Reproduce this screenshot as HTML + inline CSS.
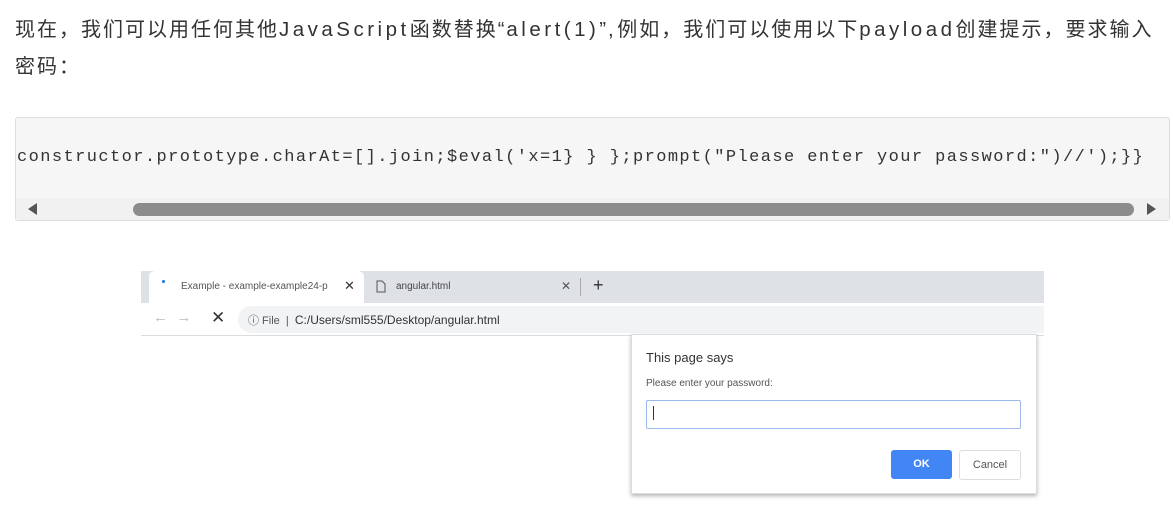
<!DOCTYPE html>
<html><head><meta charset="utf-8"><style>
body{margin:0;width:1173px;height:513px;background:#fff;overflow:hidden;font-family:"Liberation Sans","Noto Sans CJK SC",sans-serif;position:relative}
.p{position:absolute;left:15px;top:11px;white-space:nowrap;font-size:20px;line-height:37px;color:#333;letter-spacing:2px}
.p span{letter-spacing:3.5px;font-size:20.5px}
.code{position:absolute;left:15px;top:117px;width:1153px;height:102px;border:1px solid #ddd;background:#f6f6f6;border-radius:3px}
.code pre{margin:0;position:absolute;left:1px;top:30px;font-family:"Liberation Mono",monospace;font-size:17px;letter-spacing:1.42px;color:#333}
.sb{position:absolute;left:0;top:80px;width:1153px;height:22px;background:#f1f1f1}
.thumb{position:absolute;left:117px;top:5px;width:1001px;height:13px;background:#8c8c8c;border-radius:7px}
.tri{position:absolute;top:5px;width:0;height:0;border-top:6px solid transparent;border-bottom:6px solid transparent}
.sm{font-family:"Liberation Sans",sans-serif;position:absolute}
</style></head><body>
<div class="p">现在，我们可以用任何其他<span>JavaScript</span>函数替换“<span>alert(1)</span>”<span>,</span>例如，我们可以使用以下<span>payload</span>创建提示，要求输入<br>密码：</div>
<div class="code"><pre>constructor.prototype.charAt=[].join;$eval('x=1} } };prompt("Please enter your password:")//');}}</pre>
<div class="sb"><div class="tri" style="left:12px;border-right:9px solid #555"></div><div class="thumb"></div><div class="tri" style="left:1131px;border-left:9px solid #555"></div></div></div>

<div style="position:absolute;left:141px;top:271px;width:903px;height:32px;background:#dee1e6"></div>
<div style="position:absolute;left:149px;top:271px;width:215px;height:32px;background:#fff;border-radius:6px 6px 0 0"></div>
<div style="position:absolute;left:162px;top:280px;width:3px;height:3px;background:#1a73e8;border-radius:2px"></div>
<div class="sm" style="left:181px;top:281px;font-size:10px;color:#555">Example - example-example24-p</div>
<div class="sm" style="left:344px;top:278px;font-size:13px;color:#333">✕</div>
<svg style="position:absolute;left:376px;top:280px" width="10" height="13"><path d="M1 1h5l3 3v8H1z" fill="none" stroke="#555"/></svg>
<div class="sm" style="left:396px;top:281px;font-size:10px;color:#444">angular.html</div>
<div class="sm" style="left:561px;top:279px;font-size:12px;color:#555">✕</div>
<div style="position:absolute;left:580px;top:278px;width:1px;height:18px;background:#aaa"></div>
<div class="sm" style="left:593px;top:275px;font-size:18px;color:#333">+</div>
<div style="position:absolute;left:141px;top:303px;width:903px;height:32px;background:#fff;border-bottom:1px solid #ddd"></div>
<div class="sm" style="left:153px;top:309px;font-size:15px;color:#bbb">← &nbsp;→</div>
<div class="sm" style="left:211px;top:308px;font-size:17px;color:#333">✕</div>
<div style="position:absolute;left:238px;top:306px;width:806px;height:27px;background:#f1f3f4;border-radius:14px 0 0 14px"></div>
<div class="sm" style="left:248px;top:312px;font-size:11px;color:#555">ⓘ File &nbsp;|&nbsp; <span style="color:#333;font-size:12px">C:/Users/sml555/Desktop/angular.html</span></div>

<div style="position:absolute;left:631px;top:334px;width:404px;height:158px;background:#fff;border:1px solid #ddd;box-shadow:0 2px 4px rgba(0,0,0,.3)"></div>
<div class="sm" style="left:646px;top:350px;font-size:13px;color:#333">This page says</div>
<div class="sm" style="left:646px;top:378px;font-size:10px;color:#555">Please enter your password:</div>
<div style="position:absolute;left:646px;top:400px;width:373px;height:27px;border:1px solid #9bb8ea;border-radius:2px"></div>
<div style="position:absolute;left:653px;top:406px;width:1px;height:14px;background:#333"></div>
<div class="sm" style="left:891px;top:450px;width:61px;height:29px;background:#4285f4;border-radius:3px;color:#fff;font-size:11px;font-weight:bold;text-align:center;line-height:29px">OK</div>
<div class="sm" style="left:959px;top:450px;width:60px;height:28px;border:1px solid #ddd;border-radius:3px;color:#555;font-size:11px;text-align:center;line-height:28px">Cancel</div>
</body></html>
